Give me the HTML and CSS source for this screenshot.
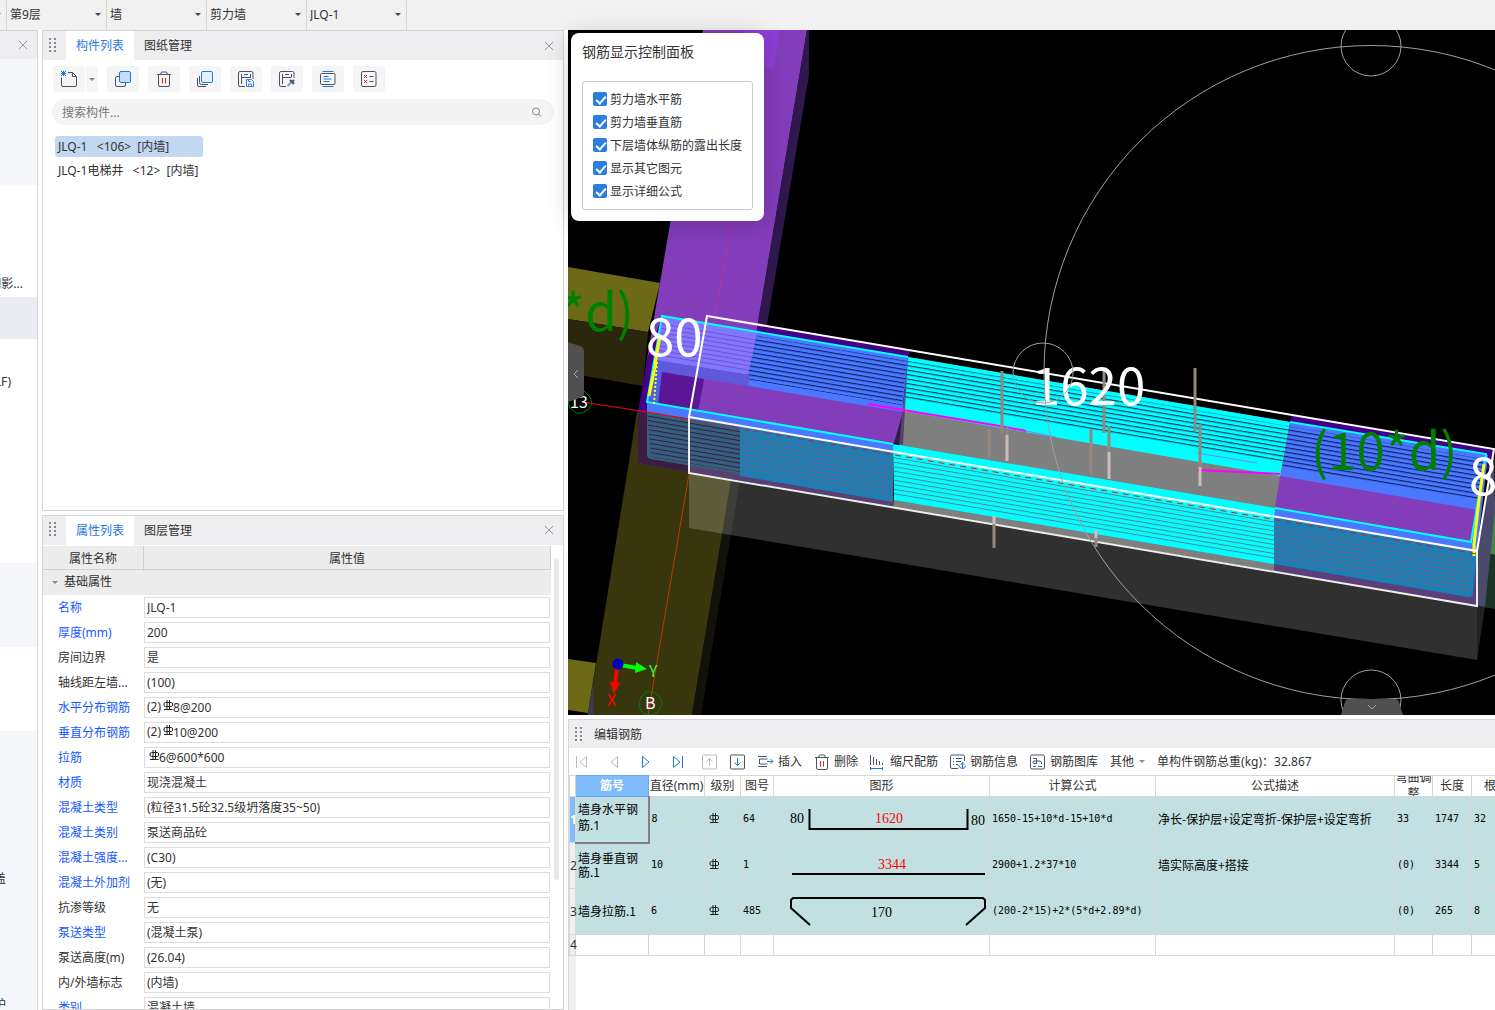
FILE: index.html
```html
<!DOCTYPE html>
<html lang="zh-CN">
  <head>
    <meta charset="UTF-8" />
    <meta name="viewport" content="width=device-width, initial-scale=1.0" />
    <title>编辑钢筋</title>
    <link rel="stylesheet" href="styles.css">
  </head>
  <body>
    <!-- shared icons -->
    <svg class="defs" width="0" height="0" aria-hidden="true">
      <symbol id="i-close" viewBox="0 0 10 10"><path d="M1 1l8 8M9 1l-8 8" stroke="#999" fill="none" /></symbol>
      <symbol id="i-grip" viewBox="0 0 8 16">
        <path d="M0 1h2M5 1h2M0 5h2M5 5h2M0 9h2M5 9h2M0 13h2M5 13h2" stroke="#888" stroke-width="2" />
      </symbol>
      <symbol id="i-rebar" viewBox="0 0 10 11">
        <path d="M4 0v9.5M6.500 0v9.500M1 9.500h8.500M2.500 2.500h6q1 0 1 1.500v1q0 1.500-1 1.500h-6q-1.500 0-1.500-1.500v-1q0-1.500 1.500-1.500z" stroke="#222" fill="none" />
      </symbol>
      <symbol id="i-trash" viewBox="0 0 16 16">
        <path d="M1 3.500h14M5 3.500V2q0-1 1-1h4q1 0 1 1v1.500M2.500 3.500V14q0 1.500 1.500 1.500h8q1.500 0 1.500-1.500V3.500" stroke="#4a5268" fill="none" />
        <path d="M6.500 7v5.500M9.500 7v5.500" stroke="#d22" />
      </symbol>
    </svg>

    <header class="topbar">
      <div class="pick pick-cut"></div>
      <div class="pick"><select aria-label="楼层"><option>第9层</option></select></div>
      <div class="pick"><select aria-label="构件大类"><option>墙</option></select></div>
      <div class="pick"><select aria-label="构件类型"><option>剪力墙</option></select></div>
      <div class="pick"><select aria-label="构件"><option>JLQ-1</option></select></div>
    </header>

    <div class="workspace">
      <nav class="modules">
        <div class="modules-head">
          <button type="button" aria-label="关闭"><svg width="10" height="10"><use href="#i-close" /></svg></button>
        </div>
        <div class="group"></div>
        <div class="group"></div>
        <div class="group"></div>
        <div class="item"></div>
        <div class="item"></div>
        <div class="item"></div>
        <div class="item item-long">阴影...</div>
        <div class="group group-on"></div>
        <div class="item"></div>
        <div class="item item-mid">(LF)</div>
        <div class="item"></div>
        <div class="item"></div>
        <div class="item"></div>
        <div class="item"></div>
        <div class="item"></div>
        <div class="item"></div>
        <div class="group"></div>
        <div class="group"></div>
        <div class="item"></div>
        <div class="item"></div>
        <div class="item"></div>
        <div class="group"></div>
        <div class="group"></div>
        <div class="group"></div>
        <div class="group">盖</div>
        <div class="group"></div>
        <div class="group"></div>
        <div class="group">护</div>
      </nav>

      <div class="side">
        <section class="panel">
          <div class="tabs">
            <svg class="grip" width="8" height="16"><use href="#i-grip" /></svg>
            <button type="button" class="tab tab-on">构件列表</button>
            <button type="button" class="tab">图纸管理</button>
            <button type="button" class="close" aria-label="关闭"><svg width="10" height="10"><use href="#i-close" /></svg></button>
          </div>
          <div class="tools">
            <div class="split">
              <button type="button" class="tool" aria-label="新建">
                <svg width="16" height="16" fill="none" stroke="#4a5268"><path d="M.5 6.500v7.500q0 1.500 1.500 1.500h12q1.500 0 1.500-1.500V5.500l-4-4H7M11.500 1.500v4h4" /><path d="M0 0l5 5M5 0L0 5M2.500 0v5M0 2.500h5" stroke="#1f78e0" /></svg>
              </button>
              <button type="button" class="tool tool-more" aria-label="更多"><i class="caret"></i></button>
            </div>
            <button type="button" class="tool" aria-label="复制">
              <svg width="16" height="16"><rect x=".5" y="5.500" width="10" height="10" rx="1.500" fill="none" stroke="#4a5268" /><rect x="4.500" y=".5" width="11" height="11" rx="1.500" fill="#c8dcf6" stroke="#1f78e0" /></svg>
            </button>
            <button type="button" class="tool" aria-label="删除"><svg width="16" height="16"><use href="#i-trash" /></svg></button>
            <button type="button" class="tool" aria-label="层间复制">
              <svg width="16" height="16" fill="none" stroke="#4a5268"><path d="M.5 7v7q0 1.500 1.500 1.500h7M2.500 5v6.500q0 2 2 2H11" /><rect x="4.500" y=".5" width="11" height="11" rx="1.500" fill="#e6f0fd" stroke="#1f78e0" /></svg>
            </button>
            <button type="button" class="tool" aria-label="存档">
              <svg width="16" height="16" fill="none" stroke="#4a5268"><path d="M7 15.500H2q-1.500 0-1.500-1.500V2Q.5.5 2 .5h11.500q1.500 0 1.500 1.500v6M3.500 3v10M3.500 6.500h9M12.500 3v4M6 3.500h4" /><path d="M8.500 8.500h5l2 2v5h-7z" fill="#fff" stroke="#3a86e8" /><path d="M10.500 9v1.500h2.500M10.500 15v-2h3v2" stroke="#3a86e8" /></svg>
            </button>
            <button type="button" class="tool" aria-label="提取">
              <svg width="16" height="16" fill="none" stroke="#4a5268"><path d="M7 15.500H2q-1.500 0-1.500-1.500V2Q.5.5 2 .5h11.500q1.500 0 1.500 1.500v5M3.500 3v10M3.500 6.500h9M12.500 3v3M6 3.500h4" /><path d="M8.500 15l4-4" stroke="#7d9cc4" stroke-width="2" /><path d="M11 9l4 4M13 11l2-2" stroke-width="2" /></svg>
            </button>
            <button type="button" class="tool" aria-label="排列">
              <svg width="16" height="16" fill="none" stroke="#1f78e0"><path d="M2.500.5h11M2.500 15.500h11M3.500 5.500h5M3.500 8h8M3.500 10.500h6" /><rect x=".5" y="2.500" width="14.500" height="11" rx="1" stroke="#4a5268" /></svg>
            </button>
            <button type="button" class="tool" aria-label="检查">
              <svg width="16" height="16" fill="none" stroke="#4a5268"><rect x=".5" y=".5" width="14.500" height="15" rx="1.500" /><path d="M8.500 5.500h4M8.500 10.500h4" /><path d="M3 4l3 3M6 4L3 7M3 9l3 3M6 9l-3 3" stroke="#d22" /></svg>
            </button>
          </div>
          <div class="search">
            <input type="text" aria-label="搜索构件" placeholder="搜索构件..." />
            <svg width="12" height="12" fill="none" stroke="#888"><circle cx="5" cy="5.500" r="3.500" /><path d="M7.500 8l2.500 2.500" /></svg>
          </div>
          <ul class="parts">
            <li class="part-on">JLQ-1&nbsp;&nbsp; &lt;106&gt;&nbsp; [内墙]</li>
            <li>JLQ-1电梯井&nbsp;&nbsp; &lt;12&gt;&nbsp; [内墙]</li>
          </ul>
        </section>

        <section class="panel">
          <div class="tabs">
            <svg class="grip" width="8" height="16"><use href="#i-grip" /></svg>
            <button type="button" class="tab tab-on">属性列表</button>
            <button type="button" class="tab">图层管理</button>
            <button type="button" class="close" aria-label="关闭"><svg width="10" height="10"><use href="#i-close" /></svg></button>
          </div>
          <div class="props-wrap">
            <div class="props">
              <div class="props-head"><span>属性名称</span><span>属性值</span></div>
              <div class="props-group"><i class="caret"></i>基础属性</div>
              <div class="prop"><label class="blue" for="p1">名称</label><div class="field"><input id="p1" value="JLQ-1" /></div></div>
              <div class="prop"><label class="blue" for="p2">厚度(mm)</label><div class="field"><input id="p2" value="200" /></div></div>
              <div class="prop"><label for="p3">房间边界</label><div class="field"><input id="p3" value="是" /></div></div>
              <div class="prop"><label for="p4">轴线距左墙...</label><div class="field"><input id="p4" value="(100)" /></div></div>
              <div class="prop"><label class="blue" for="p5">水平分布钢筋</label><div class="field"><span>(2)</span><svg width="10" height="11"><use href="#i-rebar" /></svg><input id="p5" value="8@200" /></div></div>
              <div class="prop"><label class="blue" for="p6">垂直分布钢筋</label><div class="field"><span>(2)</span><svg width="10" height="11"><use href="#i-rebar" /></svg><input id="p6" value="10@200" /></div></div>
              <div class="prop"><label class="blue" for="p7">拉筋</label><div class="field"><svg width="10" height="11"><use href="#i-rebar" /></svg><input id="p7" value="6@600*600" /></div></div>
              <div class="prop"><label class="blue" for="p8">材质</label><div class="field"><input id="p8" value="现浇混凝土" /></div></div>
              <div class="prop"><label class="blue" for="p9">混凝土类型</label><div class="field"><input id="p9" value="(粒径31.5砼32.5级坍落度35~50)" /></div></div>
              <div class="prop"><label class="blue" for="p10">混凝土类别</label><div class="field"><input id="p10" value="泵送商品砼" /></div></div>
              <div class="prop"><label class="blue" for="p11">混凝土强度...</label><div class="field"><input id="p11" value="(C30)" /></div></div>
              <div class="prop"><label class="blue" for="p12">混凝土外加剂</label><div class="field"><input id="p12" value="(无)" /></div></div>
              <div class="prop"><label for="p13">抗渗等级</label><div class="field"><input id="p13" value="无" /></div></div>
              <div class="prop"><label class="blue" for="p14">泵送类型</label><div class="field"><input id="p14" value="(混凝土泵)" /></div></div>
              <div class="prop"><label for="p15">泵送高度(m)</label><div class="field"><input id="p15" value="(26.04)" /></div></div>
              <div class="prop"><label for="p16">内/外墙标志</label><div class="field"><input id="p16" value="(内墙)" /></div></div>
              <div class="prop"><label class="blue" for="p17">类别</label><div class="field"><input id="p17" value="混凝土墙" /></div></div>
            </div>
            <div class="scroll"><div class="thumb"></div></div>
          </div>
        </section>
      </div>

      <main class="main">
        <div class="view">
          <svg class="scene" viewBox="568 30 927 685" preserveAspectRatio="xMinYMin slice">
            <defs>
              <pattern id="h-back" width="8" height="4.500" patternUnits="userSpaceOnUse" patternTransform="skewY(9.600)"><rect width="8" height="1.200" fill="#000a40" fill-opacity=".8" /></pattern>
              <pattern id="h-pale" width="8" height="4.500" patternUnits="userSpaceOnUse" patternTransform="skewY(9.600)"><rect width="8" height="1" fill="#7a3fc8" fill-opacity=".8" /></pattern>
              <pattern id="h-front" width="8" height="4.500" patternUnits="userSpaceOnUse" patternTransform="skewY(9.600)"><rect width="8" height="1" fill="#7a5c78" fill-opacity=".8" /></pattern>
              <pattern id="h-dark" width="8" height="4.500" patternUnits="userSpaceOnUse" patternTransform="skewY(9.600)"><rect width="8" height="1" fill="#3a1a48" /></pattern>
            </defs>
            <rect x="568" y="30" width="927" height="685" />

            <!-- crossing walls -->
            <path d="M568 267l92 16-12 49-80-13z" fill="#6c6a17" />
            <path d="M568 319l80 13-5 54-75-13z" fill="#2b270c" />
            <path d="M637 412L588 715H692L740 430z" fill="#38360c" />
            <path d="M731 480L692 715H701L740 480z" fill="#12120a" />
            <path d="M568 659l28 4-8 50-20-3z" fill="#6c6a17" />
            <path d="M593 682l-5 33h6z" fill="#3c3a52" />
            <path d="M703 30H807L757 330 740 440H638L647 359z" fill="#833dbb" />
            <path d="M807 30h2v45L767 325l-10 2z" fill="#2f184d" />
            <path d="M742 30h38l-6 38-9-1z" fill="#8e3ed6" />
            <path d="M732 222l-17 95-15 93" stroke="#b8309c" fill="none" />

            <!-- neighbour wall on the right -->
            <path d="M1488 500l7 2v53l-17-4z" fill="#46854c" />
            <path d="M1478 551l17 4v54l-18-3z" fill="#1b3322" />
            <path d="M1494 449l1 60-10 98-8-1v-55z" fill="#4c4a6c" />

            <!-- wall body below the view plane -->
            <path d="M689 473L1477 606v54L689 528z" fill="#fff" fill-opacity=".19" />
            <path d="M1477 606l8 1-8 53z" fill="#222" />

            <!-- middle part -->
            <path d="M908 357L1290 422 1274 571 893 507z" fill="#7f7f7f" />
            <path d="M908 357L1290 422 1280 476 903 411z" fill="#0ff" />
            <path d="M908 361L1288 426 1282 464 905 399z" fill="url(#h-back)" />
            <path d="M893 444L1275 508 1274 564 894 500z" fill="#0ff" />
            <path d="M893 456L1274 520V560L894 496z" fill="url(#h-front)" />
            <path d="M908 357L903 445 893 443 900 408z" fill="#4a2868" fill-opacity=".7" />

            <!-- left end -->
            <path d="M647 359L638 412V463L689 472V417L662 316z" fill="#45008a" />
            <path d="M757 325L910 351 908 358 757 332z" fill="#45008a" />
            <path d="M654 360L905 405 893 446 647 403z" fill="#833dbb" />
            <path d="M662 316L908 357 902 412 655 370z" fill="#4a78ff" />
            <path d="M662 320L907 361 902 405 655 364z" fill="url(#h-back)" />
            <path d="M662 316L757 332 748 375 655 360z" fill="#8078ff" />
            <path d="M662 320L756 336 749 372 656 357z" fill="url(#h-pale)" />
            <path d="M655 360L750 375 748 386 654 371z" fill="#6058dc" />
            <path d="M662 372L704 379 698 412 658 404z" fill="#5a1696" />
            <path d="M655 360l8 1-5 43-11-2z" fill="#4a60e8" />
            <path d="M647 402L893 444V454L647 412z" fill="#4a78ff" />
            <path d="M638 412L893 453V507L638 463z" fill="#5a3f72" />
            <path d="M638 412L689 420V472L638 463z" fill="#3c1d40" />
            <path d="M647 412L740 427V474L651 459q-4-1-4-4z" fill="#35607c" />
            <path d="M647 414L740 429V472L651 457z" fill="url(#h-dark)" />
            <path d="M740 427L893 453V502L740 476z" fill="#1b7fb5" />
            <path d="M740 432L893 458V498L740 472z" fill="url(#h-front)" />

            <!-- right end -->
            <path d="M1292 415L1494 449 1490 470 1290 422z" fill="#45008a" />
            <path d="M1290 422L1488 455 1477 551 1274 517z" fill="#4a78ff" />
            <path d="M1288 426L1484 459 1478 499 1282 467z" fill="url(#h-back)" />
            <path d="M1280 476L1478 510 1471 541 1275 508z" fill="#833dbb" />
            <path d="M1274 517L1477 551V606L1274 571z" fill="#5a3f78" />
            <path d="M1274 517L1477 551 1473 594q-1 4-5 3L1274 564z" fill="#1b7fb5" />
            <path d="M1274 523L1472 556 1470 592 1274 559z" fill="url(#h-front)" />

            <!-- rebar outlines -->
            <path d="M908 357L662 316 647 402 893 444" stroke="#0ff" stroke-width="2" fill="none" />
            <path d="M1290 422L1486 454 1471 542 1275 508" stroke="#0ff" stroke-width="2" fill="none" />
            <path d="M660 336l-5 28M656 362l-7 34" stroke="#ff0" stroke-width="3" />
            <path d="M657 362l-3 42" stroke="#ff0" stroke-dasharray="2 2" stroke-width="2" />
            <path d="M1484 464l-5 36-5 44v12" stroke="#ff0" stroke-width="3" fill="none" />
            <path d="M868 404l47 8 85 14 26 5" stroke="#f0f" stroke-width="2" fill="none" />
            <path d="M1026 431l30 6M1197 453l60 10" stroke="#7a80ff" />
            <path d="M1197 470l83 4" stroke="#f0f" stroke-width="2" />
            <path d="M582 402l65 10 42 7" stroke="#f00" fill="none" />
            <path d="M689 420L1477 554" stroke="#c22" stroke-dasharray="6 5" />
            <path d="M689 474L648 715" stroke="#b83a10" />

            <!-- selection box -->
            <path d="M707 316L1494 449 1477 551 689 417z" stroke="#fff" stroke-width="2" fill="none" />
            <path d="M689 417V473L1477 606V551" stroke="#eee" stroke-width="2" fill="none" />

            <path d="M1002 371v62M989 429v29M1007 427v8M994 520v28M1104 371v62M1091 429v46M1109 426v26M1096 536v11M1195 368v63M1200 424v43" stroke="#948780" stroke-width="3" />
            <path d="M1007 435v26M994 516v8M1109 452v27M1096 530v8M1200 467v19" stroke="#c8bfbb" stroke-width="3" />

            <!-- labels -->
            <g class="dim">
              <text x="646" y="356" fill="#fff">80</text>
              <text x="1032" y="405" fill="#fff">1620</text>
              <text x="1469" y="495" fill="#fff">80</text>
              <text x="1311" y="470" fill="#008000">(10*d)</text>
              <text x="634" y="331" fill="#008000" text-anchor="end">(10*d)</text>
            </g>

            <!-- orbit control -->
            <g fill="none" stroke="#a0a0a0">
              <circle cx="1371" cy="372.500" r="327" />
              <circle cx="1371" cy="46" r="30" />
              <circle cx="1043" cy="373" r="30" />
              <circle cx="1371" cy="700" r="30" />
            </g>

            <!-- axis grid marks -->
            <g class="mark">
              <path d="M576 391h8l6 6 2 6-3 6-7 4h-6l-6-5-2-6 3-7z" fill="none" stroke="#008000" />
              <text x="570" y="408" fill="#fff">13</text>
              <path d="M646 692h8l6 5 2 6-3 8-7 4h-6l-5-4-2-6 2-8z" fill="none" stroke="#008000" />
              <text x="645" y="709" fill="#fff">B</text>
              <path d="M620 665l17 3" stroke="#0f0" stroke-width="4" />
              <path d="M636 662l11 7-12 4z" fill="#0f0" />
              <path d="M617 668l-2 17" stroke="#f00" stroke-width="4" />
              <path d="M610 682l10 1-6 11z" fill="#f00" />
              <circle cx="618" cy="664" r="5.500" fill="#0000c0" />
              <text x="649" y="677" fill="#3f3">Y</text>
              <text x="607" y="706" fill="#f00">X</text>
            </g>

            <path d="M568 342l12 4q4 1 4 5v42q0 4-4 5l-12 4z" fill="#505050" />
            <path d="M578 370l-4 4 4 4" fill="none" stroke="#aaa" />
            <path d="M1341 715l4-13q1-3 4-3h46q3 0 4 3l4 13z" fill="#505050" />
            <path d="M1368 705l4 4 4-4" fill="none" stroke="#aaa" />
          </svg>

          <div class="float">
            <h2>钢筋显示控制面板</h2>
            <div class="checks">
              <label><input type="checkbox" checked />剪力墙水平筋</label>
              <label><input type="checkbox" checked />剪力墙垂直筋</label>
              <label><input type="checkbox" checked />下层墙体纵筋的露出长度</label>
              <label><input type="checkbox" checked />显示其它图元</label>
              <label><input type="checkbox" checked />显示详细公式</label>
            </div>
          </div>
        </div>

        <section class="editor">
          <div class="editor-title"><svg class="grip" width="8" height="16"><use href="#i-grip" /></svg>编辑钢筋</div>
          <div class="editor-tools">
            <div class="pager">
              <button type="button" aria-label="首行" disabled><svg width="16" height="16" fill="none" stroke="#bbb"><path d="M2.500 2v12M12.500 2.500v11L6 8z" /></svg></button>
              <button type="button" aria-label="上一行" disabled><svg width="16" height="16" fill="none" stroke="#bbb"><path d="M11.500 2.500v11L5 8z" /></svg></button>
              <button type="button" aria-label="下一行"><svg width="16" height="16" fill="none" stroke="#1f78e0"><path d="M4.500 2.500v11L11 8z" /></svg></button>
              <button type="button" aria-label="末行"><svg width="16" height="16" fill="none" stroke="#1f78e0"><path d="M3.500 2.500v11L10 8zM12.500 2v12" /></svg></button>
              <button type="button" aria-label="上移" disabled><svg width="16" height="16" fill="none" stroke="#bbb"><rect x=".5" y="1" width="14" height="14" rx="1" /><path d="M7.500 12V4.500M4.500 7.500l3-3 3 3" /></svg></button>
            </div>
            <button type="button" aria-label="下移"><svg width="16" height="16" fill="none" stroke="#4a5268"><rect x=".5" y="1" width="14" height="14" rx="1" /><path d="M7.500 4v7.500M4.500 8.500l3 3 3-3" stroke="#1f78e0" /></svg></button>
            <button type="button"><svg width="16" height="16" fill="none" stroke="#4a5268"><path d="M0 2.500h9M0 12.500h9M9.500 5h-8v5h8" /><path d="M9 7.500h6M12.500 5l2.500 2.500-2.500 2.500" stroke="#1f78e0" /></svg>插入</button>
            <button type="button"><svg width="16" height="16"><use href="#i-trash" /></svg>删除</button>
            <button type="button"><svg width="16" height="16" fill="none" stroke="#4a5268"><path d="M.5 1v10M3.500 3v8M6.500 5v6M9.500 7v4M12.500 9v2" /><path d="M0 14.500h13M.5 13v3M12.500 13v3" stroke="#1f78e0" /></svg>缩尺配筋</button>
            <button type="button"><svg width="16" height="16" fill="none" stroke="#4a5268"><path d="M8 14.500H2q-1.500 0-1.500-1.500V2.500Q.5 1 2 1h11q1.500 0 1.500 1.500V7M3 4.500h1M6 4.500h6M3 7.500h1M6 7.500h5M3 10.500h1M6 10.500h2" /><path d="M12.500 8v6.500M8.500 11q1 3.500 4 3.500t3-3M10.500 10h4" stroke="#1f78e0" /></svg>钢筋信息</button>
            <button type="button"><svg width="16" height="16" fill="none" stroke="#4a5268"><rect x=".5" y="1" width="14" height="14" rx="1.500" /><path d="M3 4.500h3.500v5H4q-1 0-1-1.200t1-1.300h5q2.500 0 2.500 1.500V10" /><path d="M3 12.500h3M8 12.500h4" stroke="#1f78e0" /></svg>钢筋图库</button>
            <button type="button" class="other">其他<i class="caret"></i></button>
            <span class="total">单构件钢筋总重(kg)：32.867</span>
          </div>
          <div class="sheet">
            <table>
              <colgroup>
                <col class="c-no"><col class="c-name"><col class="c-dia"><col class="c-lvl"><col class="c-fig"><col class="c-shape">
                <col class="c-calc"><col class="c-desc"><col class="c-adj"><col class="c-len"><col class="c-cnt">
              </colgroup>
              <thead>
                <tr>
                  <th></th>
                  <th class="th-on">筋号</th>
                  <th>直径(mm)</th>
                  <th>级别</th>
                  <th>图号</th>
                  <th>图形</th>
                  <th>计算公式</th>
                  <th>公式描述</th>
                  <th><div class="th-wrap">弯曲调整</div></th>
                  <th>长度</th>
                  <th>根数</th>
                </tr>
              </thead>
              <tbody>
                <tr>
                  <th class="no-on">1</th>
                  <td class="cell-on">墙身水平钢筋.1</td>
                  <td>8</td>
                  <td><svg width="10" height="11"><use href="#i-rebar" /></svg></td>
                  <td>64</td>
                  <td class="shape">
                    <svg width="215" height="45"><path d="M35.500 12v20h158V12" fill="none" stroke="#000" stroke-width="2" /><text x="16" y="26">80</text><text x="101" y="26" fill="#f00">1620</text><text x="197" y="28">80</text></svg>
                  </td>
                  <td>1650-15+10*d-15+10*d</td>
                  <td class="desc">净长-保护层+设定弯折-保护层+设定弯折</td>
                  <td>33</td>
                  <td>1747</td>
                  <td>32</td>
                </tr>
                <tr>
                  <th>2</th>
                  <td class="name">墙身垂直钢筋.1</td>
                  <td>10</td>
                  <td><svg width="10" height="11"><use href="#i-rebar" /></svg></td>
                  <td>1</td>
                  <td class="shape">
                    <svg width="215" height="45"><path d="M18 31h193" stroke="#000" stroke-width="2" /><text x="104" y="26" fill="#f00">3344</text></svg>
                  </td>
                  <td>2900+1.2*37*10</td>
                  <td class="desc">墙实际高度+搭接</td>
                  <td>(0)</td>
                  <td>3344</td>
                  <td>5</td>
                </tr>
                <tr>
                  <th>3</th>
                  <td class="name">墙身拉筋.1</td>
                  <td>6</td>
                  <td><svg width="10" height="11"><use href="#i-rebar" /></svg></td>
                  <td>485</td>
                  <td class="shape">
                    <svg width="215" height="45"><path d="M36 36L17 19V11l2-2H209l2 2v8L192 36" fill="none" stroke="#000" stroke-width="2" /><text x="97" y="28">170</text></svg>
                  </td>
                  <td>(200-2*15)+2*(5*d+2.89*d)</td>
                  <td></td>
                  <td>(0)</td>
                  <td>265</td>
                  <td>8</td>
                </tr>
                <tr class="blank">
                  <th>4</th>
                  <td></td><td></td><td></td><td></td><td></td><td></td><td></td><td></td><td></td><td></td>
                </tr>
              </tbody>
            </table>
            <div class="gutter"></div>
          </div>
        </section>
      </main>
    </div>
  </body>
</html>
```
FILE: styles.css
```css
* {
  box-sizing: border-box;
}
body {
  margin: 0;
  height: 100vh;
  display: flex;
  flex-direction: column;
  overflow: hidden;
  background: #fff;
  color: #333;
  font: 12px/16px "Noto Sans", "Noto Sans CJK SC", sans-serif;
}
button,
input,
select {
  font: inherit;
  color: inherit;
}
button {
  border: none;
  background: none;
  padding: 0;
  cursor: pointer;
}
.defs {
  position: absolute;
}
svg {
  flex: none;
}
.caret {
  width: 0;
  height: 0;
  border: 3px solid transparent;
  border-top-color: #888;
  border-bottom: none;
}

/* top bar */
.topbar {
  flex: none;
  display: flex;
  height: 30px;
  background: #f1f1f1;
}
.pick {
  position: relative;
  width: 100px;
  border-right: 1px solid #d5d5d5;
}
.pick-cut {
  width: 7px;
}
.pick select {
  appearance: none;
  width: 100%;
  height: 29px;
  padding: 0 20px 0 3px;
  border: none;
  background: none;
}
.pick::after {
  content: "";
  position: absolute;
  right: 5px;
  top: 13px;
  border: 3px solid transparent;
  border-top-color: #444;
  border-bottom: none;
}

.workspace {
  flex: 1;
  min-height: 0;
  display: grid;
  grid-template-columns: 38px 522px 1fr;
  column-gap: 4px;
}

/* module list, cut by the window edge */
.modules {
  overflow: hidden;
  border-right: 1px solid #d5d5d5;
}
.modules-head {
  height: 29px;
  background: #eeeef0;
  border-top: 1px solid #d5d5d5;
  display: flex;
  align-items: center;
  justify-content: flex-end;
  padding-right: 9px;
}
.modules-head button,
.close {
  display: flex;
}
.group,
.item {
  display: flex;
  align-items: center;
  justify-content: flex-end;
  height: 28px;
  padding: 2px 31px 0 0;
  white-space: nowrap;
}
.group {
  height: 42px;
  background: #f5f7fa;
}
.group-on {
  background: #eaecf1;
}
.item-long {
  padding-right: 14px;
}
.item-mid {
  padding-right: 26px;
}

/* side panels */
.side {
  display: grid;
  grid-template-rows: 34fr 35fr;
  row-gap: 4px;
  min-height: 0;
}
.panel {
  border: 1px solid #d5d5d5;
  min-height: 0;
  overflow: hidden;
}
.tabs {
  display: flex;
  align-items: center;
  height: 29px;
  padding: 0 9px 0 6px;
  background: #eeeef0;
}
.grip {
  margin-right: 9px;
}
.tab {
  height: 29px;
  padding: 1px 10px 0;
}
.tab-on {
  background: #fff;
  color: #1f78e0;
}
.close {
  margin-left: auto;
}
.tools {
  display: flex;
  gap: 9px;
  padding: 6px 10px 7px;
}
.split {
  display: flex;
  gap: 1px;
}
.tool {
  display: flex;
  align-items: center;
  justify-content: center;
  width: 32px;
  height: 26px;
  border-radius: 3px;
  background: #f5f5f5;
}
.tool-more {
  width: 12px;
}
.search {
  display: flex;
  align-items: center;
  height: 26px;
  margin: 0 9px;
  padding: 0 11px 0 10px;
  border-radius: 13px;
  background: #f4f4f4;
}
.search input {
  flex: 1;
  border: none;
  background: none;
  padding: 2px 0 0;
  outline: none;
}
.search input::placeholder {
  color: #777;
}
.parts {
  list-style: none;
  margin: 11px 12px;
  padding: 0;
}
.parts li {
  width: 148px;
  height: 21px;
  margin-bottom: 3px;
  padding: 0 3px;
  line-height: 21px;
  border-radius: 3px;
  white-space: nowrap;
}
.parts .part-on {
  background: #c1d8f0;
}

/* properties */
.props-wrap {
  display: flex;
  padding-top: 1px;
}
.props {
  flex: 1;
}
.props-head {
  display: grid;
  grid-template-columns: 101px 1fr;
  height: 24px;
  line-height: 25px;
  text-align: center;
  background: #ececec;
  border: solid #d0d0d0;
  border-width: 0 1px 1px 0;
}
.props-head span:first-child {
  border-right: 1px solid #d0d0d0;
}
.props-group {
  display: flex;
  align-items: center;
  gap: 6px;
  height: 25px;
  padding-left: 9px;
  background: #ececec;
}
.prop {
  display: grid;
  grid-template-columns: 101px 1fr;
  align-items: center;
  height: 25px;
}
.prop label {
  padding: 2px 0 0 15px;
  white-space: nowrap;
}
.blue {
  color: #1459ff;
}
.field {
  display: flex;
  align-items: center;
  height: 21px;
  margin-right: 1px;
  padding: 0 2px;
  border: 1px solid #ddd;
}
.field svg {
  margin: 0 0 4px 2px;
}
.field input {
  flex: 1;
  min-width: 0;
  height: 19px;
  padding: 0;
  border: none;
  outline: none;
}
.scroll {
  width: 12px;
  padding: 12px 3px;
}
.thumb {
  width: 5px;
  height: 322px;
  border-radius: 3px;
  background: #e8e8e8;
}

/* 3D view */
.main {
  display: grid;
  grid-template-rows: 1fr 291px;
  row-gap: 4px;
  min-width: 0;
  min-height: 0;
}
.view {
  position: relative;
  min-height: 0;
}
.scene {
  display: block;
  width: 100%;
  height: 100%;
}
.dim text {
  font: 51px "Noto Sans CJK SC", sans-serif;
}
.mark text {
  font: 16px "Noto Sans CJK SC", sans-serif;
}
.float {
  position: absolute;
  left: 3px;
  top: 3px;
  width: 193px;
  padding: 9px 11px 11px;
  border-radius: 8px;
  background: #fff;
  box-shadow: 0 4px 24px rgba(0, 0, 0, 0.2);
}
.float h2 {
  margin: 0 0 19px;
  font-size: 14px;
  line-height: 20px;
  font-weight: normal;
}
.checks {
  padding: 6px 0 6px 10px;
  border: 1px solid #ccc;
  border-radius: 3px;
}
.checks label {
  display: flex;
  align-items: center;
  gap: 3px;
  height: 23px;
  white-space: nowrap;
}
.checks input {
  appearance: none;
  position: relative;
  width: 14px;
  height: 14px;
  margin: 0 0 2px;
  border-radius: 2px;
  background: #2a7de1;
}
.checks input::after {
  content: "";
  position: absolute;
  left: 5px;
  top: 2px;
  width: 4px;
  height: 8px;
  border: solid #fff;
  border-width: 0 2px 2px 0;
  transform: rotate(42deg);
}

/* rebar editor */
.editor {
  display: flex;
  flex-direction: column;
  min-width: 0;
  overflow: hidden;
  border: solid #d5d5d5;
  border-width: 1px 0 0 1px;
}
.editor-title {
  flex: none;
  display: flex;
  align-items: center;
  height: 28px;
  padding: 1px 0 0 6px;
  background: #eeeef0;
}
.editor-title .grip {
  margin-right: 11px;
}
.editor-tools {
  flex: none;
  display: flex;
  align-items: center;
  gap: 12px;
  height: 27px;
  padding-left: 5px;
  white-space: nowrap;
}
.editor-tools button {
  display: flex;
  align-items: center;
  gap: 4px;
}
.pager {
  display: flex;
  gap: 16px;
}
.editor-tools .other {
  gap: 5px;
}
.sheet {
  flex: 1;
  display: flex;
  flex-direction: column;
  overflow: hidden;
}
.sheet table {
  flex: none;
  width: 951px;
  table-layout: fixed;
  border-collapse: collapse;
}
.c-no { width: 6px; }
.c-name { width: 73px; }
.c-dia { width: 56px; }
.c-lvl { width: 36px; }
.c-fig { width: 33px; }
.c-shape { width: 216px; }
.c-calc { width: 166px; }
.c-desc { width: 239px; }
.c-adj { width: 38px; }
.c-len { width: 39px; }
.c-cnt { width: 49px; }
.sheet th,
.sheet td {
  height: 46px;
  padding: 0 2px;
  border: 1px solid #d8d8d8;
}
.sheet th {
  padding: 0;
  font-weight: normal;
  white-space: nowrap;
}
.sheet thead th {
  height: 21px;
}
.sheet thead .th-on {
  background: #80bbfc;
  border-color: #6aa8ee;
  color: #fff;
  font-weight: bold;
}
.th-wrap {
  display: flex;
  align-items: center;
  height: 20px;
  overflow: hidden;
  white-space: normal;
}
.sheet tbody th {
  background: #f0f0f0;
}
.sheet tbody .no-on {
  background: #80bbfc;
  color: #fff;
  font-weight: bold;
}
.sheet td {
  padding-bottom: 2px;
  background: #c2dfe1;
  color: #000;
  font-size: 10px;
  font-family: "DejaVu Sans Mono", "Noto Sans CJK SC", monospace;
  white-space: nowrap;
}
.sheet td svg {
  display: block;
  margin-left: 2px;
}
.sheet .desc,
.sheet .name {
  font-size: 12px;
  font-family: "Noto Sans CJK SC", sans-serif;
}
.sheet .name {
  line-height: 14px;
  white-space: normal;
}
.sheet .cell-on {
  font-size: 12px;
  font-family: "Noto Sans", "Noto Sans CJK SC", sans-serif;
  white-space: normal;
  border-right: 2px solid #808080;
  border-bottom: 2px solid #808080;
}
.sheet .shape {
  padding: 0;
}
.sheet .shape svg {
  margin: 0;
}
.shape text {
  font: 14px "Liberation Serif", serif;
}
.sheet .blank th,
.sheet .blank td {
  height: 21px;
}
.sheet .blank td {
  background: #fff;
}
.gutter {
  flex: 1;
  width: 7px;
  background: #f0f0f0;
}
```
